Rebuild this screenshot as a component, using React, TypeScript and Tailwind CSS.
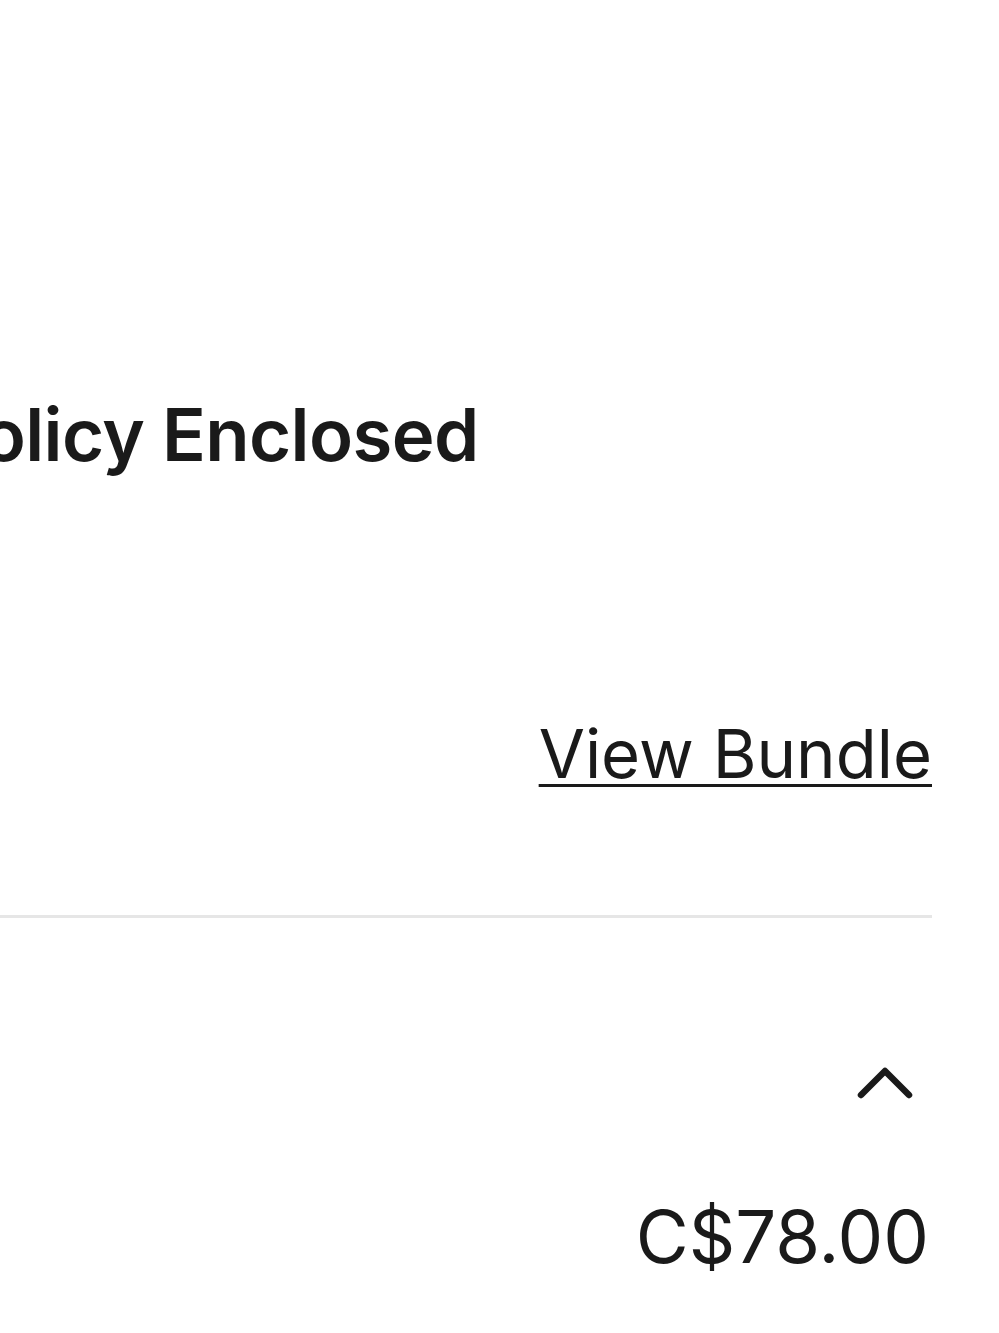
import React from "react";

export default function App() {
  return (
    <div className="w-[999px] h-[1333px] overflow-hidden bg-white text-[#1a1a1a]" style={{ fontFamily: "Inter, 'Liberation Sans', sans-serif" }}>
      <div className="flex flex-col w-[932px]">
        <div className="pt-[385px] h-[500px]">
          <div className="ml-[-64px] whitespace-nowrap text-[72.5px] leading-[100px] font-semibold tracking-[-0.6px] text-[#1a1a1a]">
            Policy Enclosed
          </div>
        </div>
        <div className="flex justify-end pt-[214px]">
          <a className="text-[67px] leading-[80px] font-normal underline decoration-[3px] underline-offset-[6px] text-[#1a1a1a]">View Bundle</a>
        </div>
        <div className="mt-[121px] h-[3px] bg-[#e6e6e6]" />
        <div className="flex justify-end pt-[145px] pr-[19px]">
          <svg width="56" height="38" viewBox="0 0 56 38" fill="none">
            <path d="M4 32 L28 8 L52 32" stroke="#1a1a1a" strokeWidth="6.5" strokeLinecap="round" strokeLinejoin="round" />
          </svg>
        </div>
        <div className="flex justify-end pt-[91px] pr-[3px]">
          <span className="text-[72.5px] leading-[90px] text-[#1a1a1a]">C$78.00</span>
        </div>
      </div>
    </div>
  );
}
